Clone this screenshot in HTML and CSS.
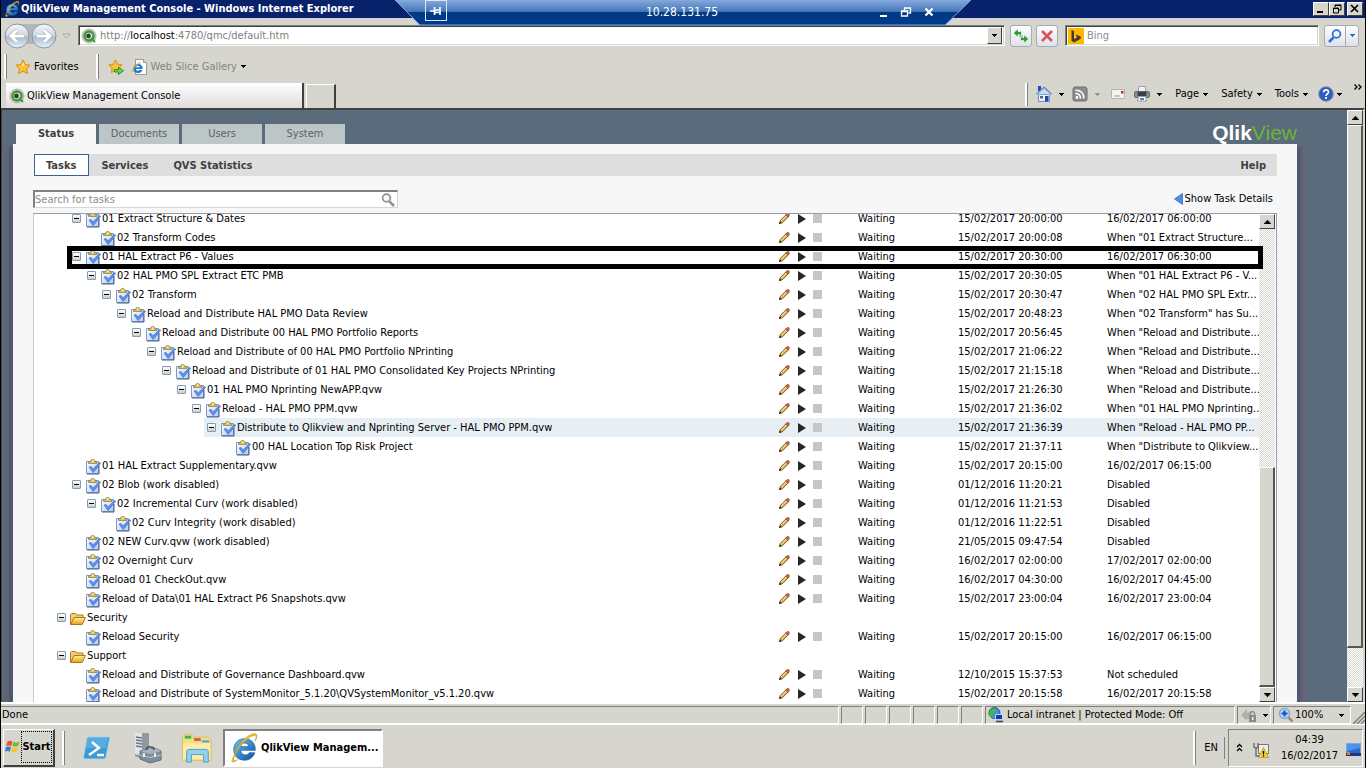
FILE: index.html
```html
<!DOCTYPE html>
<html lang="en">
<head>
<meta charset="utf-8">
<title>QlikView Management Console</title>
<link rel="stylesheet" href="styles.css">
</head>
<body>
<svg class="sprite" aria-hidden="true">
  <defs>
    <linearGradient id="gGold" x1="0" y1="0" x2="0" y2="1"><stop offset="0" stop-color="#fff3a0"/><stop offset="1" stop-color="#e8a010"/></linearGradient>
    <linearGradient id="gBlue" x1="0" y1="0" x2="1" y2="1"><stop offset="0" stop-color="#6cc4f2"/><stop offset="1" stop-color="#0a4fa0"/></linearGradient>
    <linearGradient id="gPaper" x1="0" y1="0" x2="1" y2="1"><stop offset="0" stop-color="#ffffff"/><stop offset="1" stop-color="#b9cbea"/></linearGradient>
    <linearGradient id="gBar" x1="0" y1="0" x2="0" y2="1"><stop offset="0" stop-color="#84a9dd"/><stop offset=".45" stop-color="#4678b8"/><stop offset=".46" stop-color="#003984"/><stop offset="1" stop-color="#003c8c"/></linearGradient>
    <linearGradient id="gNav" x1="0" y1="0" x2="0" y2="1"><stop offset="0" stop-color="#f6f7f8"/><stop offset=".45" stop-color="#d3dae2"/><stop offset=".55" stop-color="#adbdcd"/><stop offset="1" stop-color="#e4f2fa"/></linearGradient>
  </defs>
  <symbol id="ie" viewBox="0 0 32 32">
    <path d="M28 18.500H12.500c.4 6 7.500 6 9 2.500h6C25.500 27 21 29 16.500 29 9.500 29 5 24 5 17.500S9.800 6 16.500 6C24 6 28.500 11 28 18.500zM12.500 14.500h8.500c-.5-5-8-5-8.500 0z" fill="url(#gBlue)" stroke="#1a5cae" stroke-width=".7"/>
    <path d="M5.500 24C1 32 3.500 32.500 9 28.500 4 31 3.800 28 8 20 12.500 11.500 21 4 26 2.600c3.800-1 3.500 2 1.800 6C31.500 1 29.500-.5 24 1.500 17 4 9 14 5.500 24z" fill="#f7c331" stroke="#d89a14" stroke-width=".8"/>
  </symbol>
  <symbol id="qlik" viewBox="0 0 16 16">
    <circle cx="8" cy="8" r="7" fill="#c9ccc9" stroke="#b4b7b4"/><circle cx="8" cy="8" r="4.500" fill="#e8f4e4" stroke="#3d9b35" stroke-width="2.400"/><circle cx="7.500" cy="8" r="2.400" fill="#3a3a3a"/><path d="M10 10l4 4" stroke="#3d9b35" stroke-width="2"/>
  </symbol>
  <symbol id="star" viewBox="0 0 16 16">
    <path d="M8 1l2.200 4.600 5 .6-3.700 3.400 1 5L8 12.100l-4.500 2.500 1-5L.8 6.200l5-.6z" fill="#fbc335" stroke="#d98c14"/>
    <path d="M8 3.300l1.500 3.200-2.500 1z" fill="#fff0a8"/>
  </symbol>
  <symbol id="staradd" viewBox="0 0 16 16">
    <path d="M7.500 1l2 4.200 4.600.6-3.300 3.200.8 4.600-4.100-2.300-4.100 2.300.8-4.600L.9 5.800l4.600-.6z" fill="#fbc335" stroke="#d98c14"/>
    <path d="M6.500 10.500h4V8L15.500 11.800l-5 3.800V13h-4z" fill="#6fd53c" stroke="#23891c" stroke-width=".9"/>
  </symbol>
  <symbol id="slice" viewBox="0 0 16 16">
    <path d="M3.500.5h8l3 3v12h-11z" fill="#fdfdfd" stroke="#9a9a9a"/><path d="M11.500.5v3h3" fill="#d8d8d8" stroke="#9a9a9a"/>
    <path d="M10.600 10H3.800c.4 2.200 2.800 1.900 3.600.9h3C9.800 13 8 14 6 14c-3 0-4.800-2-4.800-4.600C1.200 7 3.200 5 6 5c3 0 4.800 2 4.600 5zM4 8.200h3.900C7.600 6.400 4.400 6.400 4 8.200z" fill="#1c7bd0"/>
    <path d="M1 13C-.5 11 3 5.500 8.500 3.500" stroke="#efae22" fill="none" stroke-width="1.200"/>
  </symbol>
  <symbol id="task" viewBox="0 0 16 16">
    <path d="M1.500 2.500h12v12h-12z" fill="url(#gPaper)" stroke="#7b98cc"/><path d="M2 15h12V7" fill="none" stroke="#46618f"/>
    <path d="M3.500 4.500V3h2c0-3.600 4.500-3.600 4.500 0h2v1.500z" fill="#dcc873" stroke="#97833a" stroke-width=".8"/><circle cx="7.700" cy="2.200" r=".8" fill="#fff8d0"/>
    <path d="M4 8l2-.6 2.200 2.400L14.500 3.500l1.300.7-6.600 8.300L8 13.500z" fill="#5b92ee" stroke="#2a5cc4" stroke-width=".5"/>
  </symbol>
  <symbol id="folder" viewBox="0 0 16 16">
    <path d="M.5 13.500v-10l1-1h4l1.500 1.500h6v3" fill="#f3cf72" stroke="#a97c22"/><path d="M.7 13.500L4 6.500h11.500l-3.300 7z" fill="url(#gGold)" stroke="#a9761a"/>
  </symbol>
  <symbol id="pencil" viewBox="0 0 11 11">
    <path d="M.5 10.500l1-3.200L7.800 1l2.200 2.200L3.700 9.500z" fill="#e3b64a" stroke="#54431c" stroke-width=".8"/><path d="M6.800 2L8.500.4c.8-.5 2.300.9 1.900 1.900L8.900 4z" fill="#d06050" stroke="#7c3028" stroke-width=".5"/><path d="M0 11l.8-2.600L2.600 10.200z" fill="#222"/><path d="M2.500 7.800L7.200 3" stroke="#fff1b0" stroke-width=".8"/>
  </symbol>
  <symbol id="caret" viewBox="0 0 5 3"><path d="M0 0h5v1H4v1H3v1H2V2H1V1H0z" fill="currentColor"/></symbol>
  <symbol id="home" viewBox="0 0 16 16">
    <path d="M2 0h3v5H2z" fill="#2444c8"/><path d="M2.500 8.500h11v7h-11z" fill="#eaf1fb" stroke="#7090c4"/><path d="M.5 8.200L8 1.200l7.500 7" fill="#c7d9f2" stroke="#6a88b8" stroke-width="1.300"/><path d="M9 10h3.500v5.500H9z" fill="#27489c"/><path d="M4 10h3v2.500H4z" fill="#55647c"/>
  </symbol>
  <symbol id="feed" viewBox="0 0 16 16">
    <rect x="1" y="1" width="14" height="14" rx="2" fill="#8c8c8c" stroke="#6e6e6e"/><circle cx="5" cy="11.500" r="1.400" fill="#fff"/><path d="M3.500 7.500q5 0 5 5M3.500 4.200q8.300 0 8.300 8.300" fill="none" stroke="#fff" stroke-width="1.500"/>
  </symbol>
  <symbol id="mail" viewBox="0 0 16 16"><path d="M1.500 3.500h13v9h-13z" fill="#f4f4f4" stroke="#b4b4b4"/><path d="M4 10h6" stroke="#999"/><path d="M11 5h2.500v2.500H11z" fill="#c8281c"/></symbol>
  <symbol id="print" viewBox="0 0 16 16">
    <path d="M4.500.5h7v6h-7z" fill="#eef3f8" stroke="#98a4b0"/><rect x=".5" y="5.500" width="15" height="6" rx="1.500" fill="#8a9298" stroke="#666"/><path d="M3.500 6h9v4h-9z" fill="#3c4044"/><path d="M4.500 10.500h7l1 4.500h-9z" fill="#fff" stroke="#999"/><path d="M6 12h4v2H6z" fill="#3a8ad4"/>
  </symbol>
  <symbol id="help" viewBox="0 0 16 16"><circle cx="8" cy="8" r="7.300" fill="#2f5cc4" stroke="#8a8f9c"/><path d="M5.600 6.300C5.600 3 10.600 3 10.500 6c0 1.900-2.500 1.800-2.500 4" fill="none" stroke="#fff" stroke-width="1.700"/><path d="M7.100 11h1.900v1.800H7.100z" fill="#fff"/></symbol>
  <symbol id="globe" viewBox="0 0 16 16"><circle cx="6.500" cy="6" r="5.500" fill="#3d8ee0" stroke="#1c58a4"/><path d="M3 2q4-1 5 1t-2 3-1 4-3-1T1.500 5z" fill="#46b83c"/><path d="M7.500 7.500h7v5h-7z" fill="#1838b0" stroke="#c8d8f4"/><path d="M8 14.500h7" stroke="#445" stroke-width="1.600"/></symbol>
  <symbol id="lens" viewBox="0 0 16 16"><path d="M9.500 9.500l5 5" stroke="#b08a5c" stroke-width="2.600"/><circle cx="6.500" cy="6.500" r="5" fill="#b4dafc" stroke="#7cacdc" stroke-width="1.500"/><path d="M6.500 3.500v6M3.500 6.500h6" stroke="#1450b0" stroke-width="2"/></symbol>
  <symbol id="find" viewBox="0 0 14 14"><path d="M5.500 8.500L1 13" stroke="currentColor" stroke-width="2.500"/><circle cx="8.500" cy="5" r="3.900" fill="#f3f8fe" stroke="currentColor" stroke-width="1.700"/></symbol>
</svg>

<div class="desktop">
  <header class="titlebar">
    <svg class="i16"><use href="#ie"/></svg>
    <h1>QlikView Management Console - Windows Internet Explorer</h1>
    <div class="winbtns">
      <button aria-label="Minimize"><svg viewBox="0 0 12 10"><path d="M2 8h6" stroke="#000" stroke-width="2"/></svg></button>
      <button aria-label="Restore"><svg viewBox="0 0 12 10"><path d="M4 1h6v5H8M4 1v2M4 1.500h6M2.500 4v5h5V4zM2 4.500h6" fill="none" stroke="#000"/></svg></button>
      <button aria-label="Close" class="close"><svg viewBox="0 0 12 10"><path d="M2 1l7 7M9 1L2 8" stroke="#000" stroke-width="1.700"/></svg></button>
    </div>
  </header>
  <div class="remote">
    <svg class="remotebg" viewBox="0 0 576 26" preserveAspectRatio="none"><path d="M0 0l25 25.500h525L576 0z" fill="url(#gBar)"/><path d="M0 0l25 25h525L576 0" fill="none" stroke="#7fa6d6"/></svg>
    <button class="pin" aria-label="Pin"><svg viewBox="0 0 12 10"><path d="M0 5h4M4.500 1v8M5 4h4M5 6.500h4M10 1v8" stroke="#fff" stroke-width="1.700"/></svg></button>
    <span class="host">10.28.131.75</span>
    <button aria-label="Minimize"><svg viewBox="0 0 12 12"><path d="M3 10h7" stroke="#fff" stroke-width="2"/></svg></button>
    <button aria-label="Restore"><svg viewBox="0 0 12 12"><path d="M4.500 4V2h6v5H8.500M1.500 5h6v5h-6zM4 2h7M1 5.500h7" fill="none" stroke="#fff" stroke-width="1.300"/></svg></button>
    <button aria-label="Close"><svg viewBox="0 0 12 12"><path d="M2.500 2.500l7 7M9.500 2.500l-7 7" stroke="#fff" stroke-width="2.200"/></svg></button>
  </div>

  <div class="navrow">
    <svg class="backfwd" viewBox="0 0 58 28"><rect x="6" y="2" width="46" height="20" rx="10" fill="#b2b6b8"/><g stroke="#8b97a3"><circle cx="15" cy="14" r="12" fill="url(#gNav)"/><circle cx="42" cy="14" r="12" fill="url(#gNav)"/></g><path d="M22 14H10M15 8l-6 6 6 6M35 14h12M42 8l6 6-6 6" fill="none" stroke="#93a3b5" stroke-width="4"/><path d="M22 14H10M15 8l-6 6 6 6M35 14h12M42 8l6 6-6 6" fill="none" stroke="#fff" stroke-width="3"/></svg>
    <svg class="histcaret" viewBox="0 0 9 6"><path d="M1 1h7L4.500 5z" fill="#e9e9e4" stroke="#a4a49c"/></svg>
    <div class="address sunken">
      <svg class="i16"><use href="#qlik"/></svg>
      <div class="url">http://<b>localhost</b>:4780/qmc/default.htm</div>
      <button class="drop" aria-label="Address history"><svg class="caret"><use href="#caret"/></svg></button>
    </div>
    <button class="navbtn" aria-label="Refresh"><svg viewBox="0 0 16 16"><path d="M.5 5L5 .8v2.700h3.500v6H6.300V6.500H5v2.700zM15.500 11L11 15.200v-2.700H7.500V7h2.200v2.700H11V6.800z" fill="#2f9a35" stroke="#fff" stroke-width=".5"/></svg></button>
    <button class="navbtn" aria-label="Stop"><svg viewBox="0 0 16 16"><path d="M3 3l10 10M13 3L3 13" stroke="#d8545c" stroke-width="2.600"/></svg></button>
    <label class="bing sunken">
      <svg class="i16" viewBox="0 0 16 16"><path d="M0 0h16v16H0z" fill="#ffb900"/><path d="M3.500 2l2.500 1v8.200L9 9.500 7.700 6.500l5 1.900v2.300L6 14.500l-2.500-1.700z" fill="#403c34"/></svg>
      <input type="text" placeholder="Bing" aria-label="Search with Bing">
    </label>
    <div class="findgroup">
      <button class="find" aria-label="Search"><svg viewBox="0 0 14 14"><use href="#find"/></svg></button>
      <button class="findmore" aria-label="Search options"><svg class="caret"><use href="#caret"/></svg></button>
    </div>
  </div>

  <div class="favrow">
    <i class="grip"></i>
    <button class="fav"><svg class="i16"><use href="#star"/></svg>Favorites</button>
    <i class="grip"></i>
    <button class="addfav" aria-label="Add to favorites bar"><svg class="i16"><use href="#staradd"/></svg></button>
    <button class="slice"><svg class="i16"><use href="#slice"/></svg>Web Slice Gallery<svg class="caret"><use href="#caret"/></svg></button>
  </div>

  <div class="tabrow">
    <div class="pagetab"><svg class="i16"><use href="#qlik"/></svg>QlikView Management Console</div>
    <button class="newtab" aria-label="New tab"></button>
    <nav class="commands">
      <i class="grip"></i>
      <button aria-label="Home"><svg class="i16"><use href="#home"/></svg><svg class="caret"><use href="#caret"/></svg></button>
      <button aria-label="Feeds" class="dim"><svg class="i16"><use href="#feed"/></svg><svg class="caret"><use href="#caret"/></svg></button>
      <button aria-label="Mail"><svg class="i16"><use href="#mail"/></svg></button>
      <button aria-label="Print"><svg class="i16"><use href="#print"/></svg><svg class="caret"><use href="#caret"/></svg></button>
      <button class="word">Page<svg class="caret"><use href="#caret"/></svg></button>
      <button class="word">Safety<svg class="caret"><use href="#caret"/></svg></button>
      <button class="word">Tools<svg class="caret"><use href="#caret"/></svg></button>
      <button aria-label="Help" class="helpbtn"><svg class="i16"><use href="#help"/></svg><svg class="caret"><use href="#caret"/></svg></button>
      <button aria-label="More" class="more"><svg viewBox="0 0 8 6"><path d="M.5.5L3 3 .5 5.500M4.500.5L7 3 4.500 5.500" fill="none" stroke="#000" stroke-width="1.300"/></svg></button>
    </nav>
  </div>

  <main class="viewport">
    <div class="page">
      <div class="masthead">
        <nav class="maintabs">
          <a href="#status" class="on">Status</a><a href="#documents">Documents</a><a href="#users">Users</a><a href="#system">System</a>
        </nav>
        <div class="logo"><b>Qlik</b>View</div>
      </div>
      <div class="panel">
        <nav class="subtabs">
          <a href="#tasks" class="on">Tasks</a><a href="#services">Services</a><a href="#qvs">QVS Statistics</a><a href="#help" class="helplink">Help</a>
        </nav>
        <div class="tools">
          <label class="tasksearch"><input type="text" placeholder="Search for tasks" aria-label="Search for tasks"><svg viewBox="0 0 14 14"><use href="#find"/></svg></label>
          <a href="#details" class="details"><svg viewBox="0 0 9 12"><path d="M8.500.5v11L.5 6z" fill="#4a8cf0" stroke="#4a7cc8"/></svg>Show Task Details</a>
        </div>
        <div class="list">
          <div class="rows">
            <table><colgroup><col><col class="cacts"><col class="cstat"><col class="cdate"><col class="cnext"></colgroup><tbody id="tasks"></tbody></table>
          </div>
          <div class="scroll"><button class="up" aria-label="Scroll up"><svg class="caret"><use href="#caret"/></svg></button><div class="track"><div class="thumb"></div></div><button aria-label="Scroll down"><svg class="caret"><use href="#caret"/></svg></button></div>
          <div class="marker"></div>
        </div>
      </div>
    </div>
    <div class="scroll outer"><button class="up" aria-label="Scroll up"><svg class="caret"><use href="#caret"/></svg></button><div class="track"><div class="thumb"></div></div><button aria-label="Scroll down"><svg class="caret"><use href="#caret"/></svg></button></div>
  </main>

  <footer class="statusbar">
    <div class="cell msg">Done</div>
    <div class="cell s"></div><div class="cell s"></div><div class="cell s"></div><div class="cell s"></div><div class="cell s"></div><div class="cell s"></div>
    <div class="cell zone"><svg class="i16"><use href="#globe"/></svg>Local intranet | Protected Mode: Off</div>
    <div class="cell lock"><svg class="i16" viewBox="0 0 16 16"><path d="M0 8l6-6v4l4-2v8H6v2z" fill="#b0b0ac"/><path d="M8 8h7v7H8z" fill="#8c8c8c"/><path d="M9.500 8V6q2-3 4 0v2" fill="none" stroke="#8c8c8c" stroke-width="1.300"/><path d="M11 10h1.500v3H11z" fill="#eee"/></svg><svg class="caret"><use href="#caret"/></svg></div>
    <div class="cell zoomcell"><svg class="i16"><use href="#lens"/></svg>100%<svg class="caret"><use href="#caret"/></svg></div>
    <svg class="sizer" viewBox="0 0 12 12"><path d="M0 12L12 0M4 12l8-8M8 12l4-4" stroke="#808080" stroke-width="1.500"/></svg>
  </footer>

  <div class="taskbar">
    <button class="start"><svg viewBox="0 0 16 16"><path d="M2.500 2.500Q5 1 7.500 2.500L6.300 7Q4 6 1.200 7z" fill="#e8542c"/><path d="M8.500 3q3 1 6-.3L13.300 7q-3 1.300-6 .3z" fill="#7cba3c"/><path d="M1 8Q3.500 7 6 8l-1.200 4.500Q2.500 11.500 0 12.500z" fill="#3c7cd8"/><path d="M7 8.500q3 1 6-.3l-1.200 4.500q-3 1.300-6 .3z" fill="#f8c42c"/></svg><span>Start</span></button>
    <i class="grip"></i>
    <button class="quick" aria-label="PowerShell"><svg viewBox="0 0 32 32"><path d="M7.500 5h20q1.500 0 1.200 1.500L25 25q-.4 2-2.400 2H4q-2 0-1.600-2L6 6.500Q6.300 5 7.500 5z" fill="#3a9ad4" stroke="#a7d8f2"/><path d="M7 6h20l-2 10H5z" fill="#69b9e6" opacity=".6"/><path d="M11 10l7 6-10 7M16 23h7" fill="none" stroke="#fff" stroke-width="2.400"/></svg></button>
    <button class="quick" aria-label="Server Manager"><svg viewBox="0 0 32 32"><path d="M4 1h14v25l-5 2-9-4z" fill="#8e9aa2"/><path d="M4 1h7v23l-7-2z" fill="#dfe5e8"/><path d="M5 5l6 1M5 8l6 1M5 11l6 1M5 14l6 1" stroke="#69767f" stroke-width="1.400"/><path d="M9 19l15-3 6 3v9l-11 3-10-4z" fill="#7f8e9a" stroke="#626e78"/><path d="M9 19l10 3 11-3-6-3z" fill="#aab6bf"/><path d="M15 18q1-4 5-3 3 0 3 3" fill="none" stroke="#48525a" stroke-width="1.500"/><path d="M9 23l10 2.500L30 23" fill="none" stroke="#b8c4cc"/><path d="M13 21v4M24 21v4" stroke="#e4eaee" stroke-width="2"/></svg></button>
    <button class="quick" aria-label="Explorer"><svg viewBox="0 0 34 32"><path d="M1.500 29V4l2-2h8l2 2v3l3-2.500h13l2.500 3V29z" fill="#f5df85" stroke="#dcbb5c"/><path d="M4 3h7v3H4z" fill="#36b84a"/><path d="M14 5.500h7v3h-7z" fill="#e05a40"/><path d="M22 8h8v2h-8z" fill="#489ae0"/><path d="M2 11h29v17H2z" fill="#fbecac"/><path d="M6 31V20q0-2.500 2.500-2.500h18Q29 17.500 29 20v11h-5v-8H11v8z" fill="#91d2ef" stroke="#4c9cca"/></svg></button>
    <button class="app"><svg><use href="#ie"/></svg>QlikView Managem...</button>
    <div class="right">
      <i class="grip"></i>
      <span class="lang">EN</span>
      <i class="line"></i>
      <div class="tray">
        <svg class="chev" viewBox="0 0 7 9"><path d="M1 4l2.500-2.500L6 4M1 8l2.500-2.500L6 8" fill="none" stroke="#000" stroke-width="1.300"/></svg>
        <svg class="net" viewBox="0 0 16 16"><path d="M5.500 2.500h10v9h-10z" fill="#eceeee" stroke="#777"/><path d="M1 1v4q2 2 4 0V1M3 5.500V14h4" fill="none" stroke="#666" stroke-width="1.300"/><path d="M10.500 5.500l5 10h-10z" fill="#f9d32c" stroke="#b88a10" stroke-width=".7"/><path d="M10.500 9v3.500M10.500 13.300v1.200" stroke="#000" stroke-width="1.300"/></svg>
        <time>04:39<br>16/02/2017</time>
        <svg class="show" viewBox="0 0 15 13"><path d="M.5.5h14v10H.5z" fill="#2c6ac8" stroke="#7ea4d8"/><path d="M1 1h13v4L1 8z" fill="#4a94ec"/><path d="M0 10h15v3H0z" fill="#1a3a80"/><path d="M1 9h3v3H1z" fill="#f07030"/></svg>
      </div>
    </div>
  </div>
</div>
<script src="tasks.js"></script>
</body>
</html>
```

FILE: styles.css
```css
* { box-sizing: border-box; }
body { margin: 0; font: 11px/14px "DejaVu Sans Condensed", Tahoma, "Noto Sans", sans-serif; color: #000; background: #d6d6ce; }
button { font: inherit; color: inherit; background: none; border: 0; padding: 0; margin: 0; display: flex; align-items: center; justify-content: center; }
input { font: inherit; border: 0; padding: 0; background: none; outline: 0; min-width: 0; }
input::placeholder { color: #8c8c8c; opacity: 1; }
a { color: inherit; text-decoration: none; }
svg { display: block; flex: none; }
.sprite { position: absolute; width: 0; height: 0; }
.i16 { width: 16px; height: 16px; }
.caret { width: 5px; height: 3px; }
.grip { width: 3px; align-self: stretch; background: #808080; border-left: 2px solid #fff; flex: none; }
.sunken { border: 1px solid #808080; border-right-color: #fff; border-bottom-color: #fff; box-shadow: inset 1px 1px #404040, inset -1px -1px #d6d6ce; background: #fff; }

.desktop { position: relative; height: 100vh; overflow: hidden; display: flex; flex-direction: column; border: solid #000; border-width: 0 1px; }

.titlebar { height: 18px; flex: none; display: flex; align-items: center; gap: 1px; padding: 0 2px 0 3px; background: #08216b; color: #fff; }
.titlebar h1 { margin: 0; font-size: 11px; line-height: 18px; font-weight: bold; }
.winbtns { margin-left: auto; display: flex; }
.winbtns button { width: 16px; height: 14px; background: #d6d6ce; border: 1px solid #fff; border-right-color: #404040; border-bottom-color: #404040; }
.winbtns svg { width: 12px; height: 10px; }
.winbtns .close { margin-left: 2px; }

.remote { position: absolute; top: 0; left: 50%; transform: translateX(-50%); width: 576px; height: 26px; display: flex; align-items: center; gap: 11px; padding: 0 36px 2px 30px; color: #fff; z-index: 2; }
.remotebg { position: absolute; inset: 0; width: 100%; height: 100%; }
.remote button, .host { position: relative; }
.remote button svg { width: 12px; height: 12px; }
.remote .pin { width: 22px; height: 21px; border: 1px solid #dfe7f2; align-self: flex-start; }
.host { flex: 1; margin-left: 40px; text-align: center; font-size: 12px; line-height: 24px; }

.navrow { flex: none; height: 34px; display: flex; align-items: center; padding: 1px 6px 0 1px; }
.backfwd { width: 58px; height: 28px; }
.histcaret { width: 9px; height: 6px; margin: 0 7px 0 2px; }
.address { flex: 1; height: 21px; display: flex; align-items: center; padding: 2px 2px 2px 2px; margin-right: 5px; }
.url { flex: 1; margin-left: 3px; color: #808080; }
.url b { font-weight: normal; color: #000; }
.drop { width: 15px; height: 17px; background: #d6d6ce; border: 1px solid #fff; border-right-color: #404040; border-bottom-color: #404040; }
.navbtn, .findgroup { height: 22px; border: 1px solid #a4a9b4; border-radius: 3px; background: linear-gradient(#fdfdfe, #dfe2ea); }
.navbtn { width: 22px; margin-right: 4px; }
.navbtn svg { width: 16px; height: 16px; }
.bing { width: 254px; height: 21px; display: flex; align-items: center; gap: 3px; padding: 2px; margin: 0 5px 0 3px; }
.bing input { flex: 1; }
.findgroup { display: flex; width: 35px; color: #2c6cd8; }
.find { width: 21px; border-right: 1px solid #a4a9b4; }
.find svg { width: 14px; height: 14px; }
.findmore { flex: 1; }

.favrow { flex: none; height: 30px; display: flex; align-items: center; padding: 2px 0 3px 3px; }
.favrow button { gap: 3px; }
.fav { margin: 0 17px 0 8px; }
.addfav { margin: 0 8px 0 9px; }
.slice { color: #848484; }
.slice .caret { color: #000; margin-left: 1px; }

.tabrow { flex: none; height: 26px; display: flex; align-items: flex-end; padding: 0 3px 0 5px; }
.pagetab { width: 298px; height: 25px; display: flex; align-items: center; gap: 2px; padding-left: 3px; background: linear-gradient(#fff, #eceaea 60%, #dedcda); border-right: 2px solid #404040; }
.newtab { width: 30px; height: 24px; margin-left: 2px; border: 1px solid #fff; border-right: 2px solid #404040; border-bottom: 0; }
.commands { margin-left: auto; align-self: stretch; display: flex; align-items: center; padding: 0 0 2px; }
.commands button { gap: 7px; margin-left: 8px; }
.commands .word { gap: 4px; margin-left: 13px; }
.commands .grip { align-self: center; height: 23px; }
.commands .dim { margin-right: 2px; }
.commands .dim .caret { color: #909090; }
.commands .helpbtn { gap: 3px; margin-left: 10px; }
.commands .more { align-self: flex-start; margin: 2px 0 0 12px; }
.more svg { width: 8px; height: 6px; }

.viewport { flex: 1; min-height: 0; display: flex; border: 2px solid #404040; border-width: 2px 2px 0 1px; border-right-color: #d6d6ce; background: #5a6b7b; }
.page { flex: 1; min-width: 0; display: flex; flex-direction: column; padding: 14px 50px 0 11px; }
.masthead { display: flex; justify-content: space-between; padding: 0 0 0 3px; }
.maintabs { display: flex; gap: 3px; }
.maintabs a { width: 80px; height: 20px; line-height: 20px; text-align: center; background: #bcc6c6; color: #5e6263; }
.maintabs .on { background: #f7f7f7; color: #404040; font-weight: bold; }
.logo { font: 21px/17px "Liberation Sans", Arial, sans-serif; color: #6cb33e; }
.logo b { color: #fff; }
.panel { flex: 1; min-height: 0; display: flex; flex-direction: column; background: #f7f7f7; padding: 10px 20px 0; box-shadow: 3px 3px 0 #50586b, 6px 3px 0 #5a5f75, 10px 3px 2px #65657b, -4px 3px 0 #50586b, -8px 3px 2px #5e6379; clip-path: inset(0 -14px 0 -10px); }
.subtabs { flex: none; display: flex; height: 22px; margin-left: 1px; background: #dedede; color: #404040; font-weight: bold; line-height: 23px; }
.subtabs a { margin-right: 25px; }
.subtabs .on { background: #fff; border: 1px solid #3c5c9c; line-height: 21px; padding: 0 12px 0 11px; margin-right: 12px; }
.subtabs .helplink { margin: 0 11px 0 auto; }
.tools { flex: none; display: flex; justify-content: space-between; align-items: center; padding: 14px 4px 4px 0; }
.tasksearch { width: 365px; height: 18px; display: flex; align-items: center; background: #fff; border: 1px solid #808080; border-width: 2px 1px 1px 2px; border-right-color: #d6d6d6; border-bottom-color: #d6d6d6; color: #909090; }
.tasksearch input { flex: 1; }
.tasksearch svg { width: 14px; height: 14px; margin-right: 2px; transform: scaleX(-1); }
.details { display: flex; align-items: center; gap: 2px; }
.details svg { width: 9px; height: 12px; }

.list { position: relative; flex: 1; min-height: 0; display: flex; background: #fff; border: 1px solid #9a9aae; border-left-color: #c8c8c8; border-bottom: 0; padding-right: 1px; margin-top: 1px; }
.rows { flex: 1; min-width: 0; overflow: hidden; }
table { width: 100%; margin-top: -5px; border-collapse: collapse; table-layout: fixed; }
.cacts { width: 79px; }
.cstat { width: 100px; }
.cdate { width: 149px; }
.cnext { width: 152px; }
td { padding: 0; height: 19px; white-space: nowrap; overflow: hidden; line-height: 19px; vertical-align: top; }
.name { display: flex; align-items: center; height: 19px; padding-left: 3px; }
.name .i16 { margin-right: 1px; align-self: flex-end; }
.toggle { width: 9px; height: 9px; margin-right: 4px; border: 1px solid #7f9db9; border-radius: 1px; background: linear-gradient(#000, #000) center / 5px 1px no-repeat, linear-gradient(#fff, #d0ccc0); }
.leaf { width: 13px; }
.indent { display: flex; }
.indent i { width: 15px; flex: none; }
.indent i:first-child { width: 20px; }
.indent .name { flex: 1; }
.acts { display: flex; align-items: center; height: 19px; }
.acts svg { width: 11px; height: 11px; }
.acts .play { margin: 0 7px 0 8px; width: 8px; height: 10px; }
.acts .stop { width: 9px; height: 9px; background: #c6c6c6; }
.hot .name, .hot td + td { background: #e7eff5; }
.marker { position: absolute; left: 33px; right: 13px; top: 32px; height: 23px; border: 5px solid #000; pointer-events: none; }

.scroll { width: 16px; flex: none; display: flex; flex-direction: column; background: conic-gradient(#fff 25%, #d6d6ce 0 50%, #fff 0 75%, #d6d6ce 0) 0 0 / 2px 2px; }
.scroll button { width: 16px; height: 15px; flex: none; background: #d6d6ce; border: 1px solid #fff; border-right-color: #404040; border-bottom-color: #404040; }
.scroll .caret { width: 7px; height: 4px; }
.scroll .up .caret { transform: scaleY(-1); }
.track { flex: 1; display: flex; flex-direction: column; justify-content: flex-end; }
.thumb { height: 48%; background: #d6d6ce; border: 1px solid #fff; border-right: 2px solid #585850; border-bottom: 2px solid #585850; }
.outer .track { justify-content: flex-start; }
.outer .thumb { height: 93%; }

.statusbar { flex: none; height: 22px; display: flex; align-items: center; gap: 2px; padding: 2px 0 0; border-top: 2px solid #fff; }
.cell { height: 18px; display: flex; align-items: center; border: 1px solid #808080; border-right-color: #fff; border-bottom-color: #fff; }
.msg { flex: 1; border-left: 0; padding-left: 1px; }
.s { width: 22px; }
.zone { width: 250px; gap: 3px; padding-left: 2px; }
.lock { width: 34px; gap: 6px; padding-left: 3px; }
.zoomcell { width: 78px; gap: 1px; padding-left: 4px; }
.zoomcell .caret { margin: 0 0 0 15px; }
.sizer { width: 12px; height: 12px; align-self: flex-end; }

.taskbar { flex: none; height: 44px; display: flex; align-items: center; padding: 3px 2px 1px; border-top: 1px solid #fff; }
.start { width: 52px; height: 38px; background: #d6d6ce; border: 1px solid #fff; border-right: 2px solid #404040; border-bottom: 2px solid #404040; font-weight: bold; }
.start svg { width: 16px; height: 16px; }
.start span { border: 1px dotted #000; height: 32px; line-height: 30px; }
.taskbar .grip { align-self: center; height: 34px; margin: 0 16px 0 7px; }
.quick { width: 32px; margin-right: 18px; }
.quick svg { width: 32px; height: 32px; }
.app { width: 160px; height: 38px; justify-content: flex-start; gap: 2px; background: #fff; border: 2px solid #808080; border-right-color: #fff; border-bottom-color: #fff; font-weight: bold; white-space: nowrap; padding-left: 4px; margin-left: -8px; }
.app svg { width: 30px; height: 30px; }
.right { margin-left: auto; display: flex; align-items: center; gap: 6px; }
.taskbar .right .grip { margin: 0 2px 0 0; }
.line { width: 1px; height: 22px; background: #808080; }
.tray { height: 38px; display: flex; align-items: center; border: 1px solid #808080; border-right-color: #fff; border-bottom-color: #fff; padding: 0 1px 0 7px; margin-left: -3px; }
.chev { width: 7px; height: 9px; }
.net { width: 16px; height: 16px; margin: 4px 12px 0 10px; }
time { text-align: center; line-height: 16px; margin-right: 8px; }
.show { width: 15px; height: 13px; margin-top: 4px; }
```

FILE: tasks.js
```js
// [depth, kind, label, status, last run, next run]; kind: f = folder, p = parent task, t = task
const W = "Waiting";
const rows = [
  [1, "p", "01 Extract Structure & Dates", W, "15/02/2017 20:00:00", "16/02/2017 06:00:00"],
  [2, "t", "02 Transform Codes", W, "15/02/2017 20:00:08", 'When "01 Extract Structure...'],
  [1, "p", "01 HAL Extract P6 - Values", W, "15/02/2017 20:30:00", "16/02/2017 06:30:00"],
  [2, "p", "02 HAL PMO SPL Extract ETC PMB", W, "15/02/2017 20:30:05", 'When "01 HAL Extract P6 - V...'],
  [3, "p", "02 Transform", W, "15/02/2017 20:30:47", 'When "02 HAL PMO SPL Extr...'],
  [4, "p", "Reload and Distribute HAL PMO Data Review", W, "15/02/2017 20:48:23", 'When "02 Transform" has Su...'],
  [5, "p", "Reload and Distribute 00 HAL PMO Portfolio Reports", W, "15/02/2017 20:56:45", 'When "Reload and Distribute...'],
  [6, "p", "Reload and Distribute of 00 HAL PMO Portfolio NPrinting", W, "15/02/2017 21:06:22", 'When "Reload and Distribute...'],
  [7, "p", "Reload and Distribute of 01 HAL PMO Consolidated Key Projects NPrinting", W, "15/02/2017 21:15:18", 'When "Reload and Distribute...'],
  [8, "p", "01 HAL PMO Nprinting NewAPP.qvw", W, "15/02/2017 21:26:30", 'When "Reload and Distribute...'],
  [9, "p", "Reload - HAL PMO PPM.qvw", W, "15/02/2017 21:36:02", 'When "01 HAL PMO Nprinting...'],
  [10, "p", "Distribute to Qlikview and Nprinting Server - HAL PMO PPM.qvw", W, "15/02/2017 21:36:39", 'When "Reload - HAL PMO PP...', true],
  [11, "t", "00 HAL Location Top Risk Project", W, "15/02/2017 21:37:11", 'When "Distribute to Qlikview...'],
  [1, "t", "01 HAL Extract Supplementary.qvw", W, "15/02/2017 20:15:00", "16/02/2017 06:15:00"],
  [1, "p", "02 Blob (work disabled)", W, "01/12/2016 11:20:21", "Disabled"],
  [2, "p", "02 Incremental Curv (work disabled)", W, "01/12/2016 11:21:53", "Disabled"],
  [3, "t", "02 Curv Integrity (work disabled)", W, "01/12/2016 11:22:51", "Disabled"],
  [1, "t", "02 NEW Curv.qvw (work disabled)", W, "21/05/2015 09:47:54", "Disabled"],
  [1, "t", "02 Overnight Curv", W, "16/02/2017 02:00:00", "17/02/2017 02:00:00"],
  [1, "t", "Reload 01 CheckOut.qvw", W, "16/02/2017 04:30:00", "16/02/2017 04:45:00"],
  [1, "t", "Reload of Data\\01 HAL Extract P6 Snapshots.qvw", W, "15/02/2017 23:00:04", "16/02/2017 23:00:04"],
  [0, "f", "Security"],
  [1, "t", "Reload Security", W, "15/02/2017 20:15:00", "16/02/2017 06:15:00"],
  [0, "f", "Support"],
  [1, "t", "Reload and Distribute of Governance Dashboard.qvw", W, "12/10/2015 15:37:53", "Not scheduled"],
  [1, "t", "Reload and Distribute of SystemMonitor_5.1.20\\QVSystemMonitor_v5.1.20.qvw", W, "15/02/2017 20:15:58", "16/02/2017 20:15:58"],
];
const actions = `<div class="acts">
  <button aria-label="Edit"><svg><use href="#pencil"/></svg></button>
  <button aria-label="Run"><svg class="play" viewBox="0 0 8 10"><path d="M0 0l8 5-8 5z" fill="#262626"/></svg></button>
  <button aria-label="Stop" class="stop"></button></div>`;
document.getElementById("tasks").innerHTML = rows.map(([depth, kind, label, status, last, next, hot]) => `
  <tr class="${hot ? "hot" : ""}">
    <td><div class="indent">${"<i></i>".repeat(depth + 1)}<div class="name">
      ${kind === "t" ? '<span class="leaf"></span>' : '<button class="toggle" aria-label="Collapse"></button>'}
      <svg class="i16"><use href="#${kind === "f" ? "folder" : "task"}"/></svg>
      <span>${label.replace("&", "&amp;")}</span></div></div></td>
    <td>${kind === "f" ? "" : actions}</td>
    <td>${status || ""}</td><td>${last || ""}</td><td>${next || ""}</td>
  </tr>`).join("");
```
